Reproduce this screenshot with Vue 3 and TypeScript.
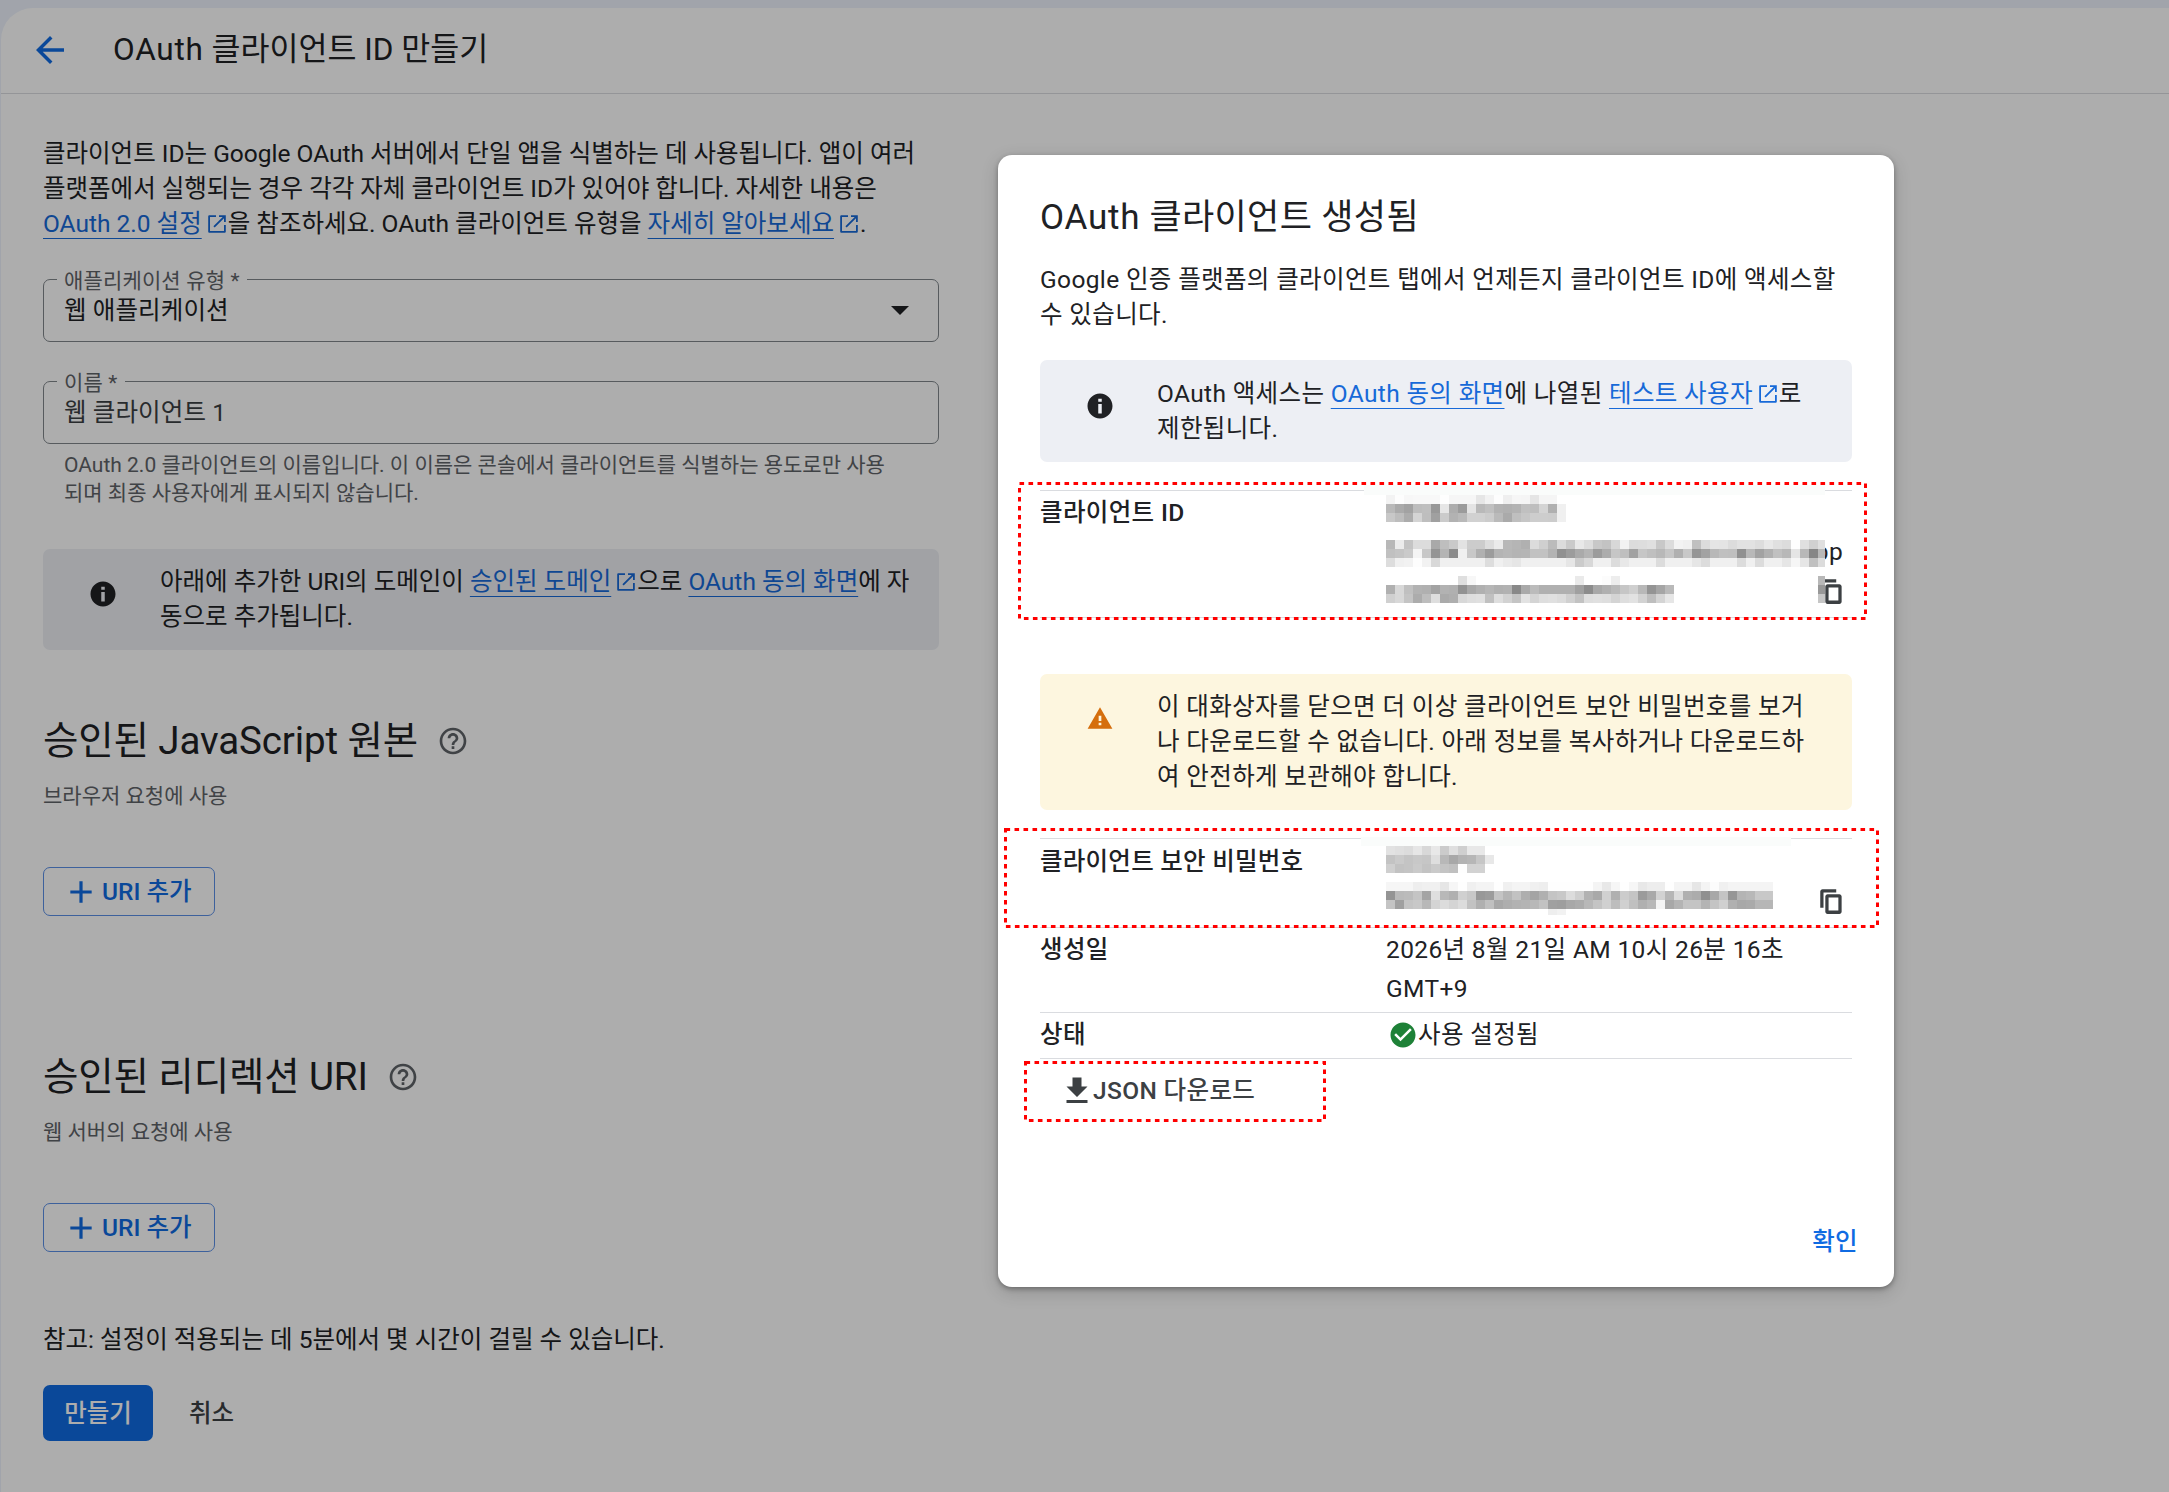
<script setup lang="ts">
import { h, type FunctionalComponent } from 'vue'

interface Mosaic {
  x: number
  y: number
  rows: string[]
}

const paths = {
  back: 'M20 11H7.83l5.59-5.59L12 4l-8 8 8 8 1.41-1.41L7.83 13H20v-2z',
  open: 'M19 19H5V5h6V3.2H4.6C3.7 3.200 3.200 3.700 3.200 4.600v14.800c0 .9.5 1.400 1.400 1.400h14.800c.9 0 1.400-.5 1.400-1.400V13H19v6zM14 3.200v1.800h3.700l-9.300 9.300 1.300 1.300L19 6.300V10h1.800V3.200H14z',
  info: 'M12 2C6.480 2 2 6.480 2 12s4.480 10 10 10 10-4.480 10-10S17.520 2 12 2zm1.400 16h-2.800v-7.600h2.800V18zm0-9.500h-2.800V6.200h2.800v2.300z',
  warn: 'M1 21h22L12 2 1 21zm12.200-3h-2.400v-2.200h2.400V18zm0-3.800h-2.400V9.500h2.400v4.700z',
  help: 'M11 18h2v-2h-2v2zm1-16C6.480 2 2 6.480 2 12s4.480 10 10 10 10-4.480 10-10S17.520 2 12 2zm0 18c-4.410 0-8-3.590-8-8s3.590-8 8-8 8 3.590 8 8-3.590 8-8 8zm0-14c-2.210 0-4 1.790-4 4h2c0-1.100.9-2 2-2s2 .9 2 2c0 2-3 1.750-3 5h2c0-2.250 3-2.500 3-5 0-2.210-1.790-4-4-4z',
  plus: 'M20 13.200h-6.800V20h-2.400v-6.800H4v-2.400h6.800V4h2.400v6.800H20v2.400z',
  copy: 'M16.200 1H4c-1.100 0-2 .9-2 2v14.500h2.900V3.900h11.300V1zm2.800 4.500H8.500c-1.100 0-2 .9-2 2V21c0 1.100.9 2 2 2H19c1.100 0 2-.9 2-2V7.500c0-1.100-.9-2-2-2zm-.9 14.600H9.400V8.400h8.700v11.700z',
  check: 'M12 2C6.480 2 2 6.480 2 12s4.480 10 10 10 10-4.480 10-10S17.520 2 12 2zm-2 15l-5-5 1.410-1.410L10 14.170l7.590-7.590L19 8l-9 9z',
  download: 'M19 9h-4V3H9v6H5l7 7 7-7zM5 18v2h14v-2H5z',
}

const Icon: FunctionalComponent<{ name: keyof typeof paths; size: number }> = (p) =>
  h('svg', { width: p.size, height: p.size, viewBox: '0 0 24 24', fill: 'currentColor' }, [
    h('path', { d: paths[p.name] }),
  ])
Icon.props = ['name', 'size']

const uriSections = [
  { title: '승인된 JavaScript 원본', hint: '브라우저 요청에 사용' },
  { title: '승인된 리디렉션 URI', hint: '웹 서버의 요청에 사용' },
]

// Each pair of hex digits is the grey level of one 9px cell.
const mosaics: Mosaic[] = [
  {
    x: 388, y: 340,
    rows: [
      'f3fdf7f8f8f8fef6f6f6e6f2fdeff6f5e5f5f5',
      'b9aaa2bdbf98e6ad9be4b9c0b2b0b3c0bed4b0f0',
      'c8bdacd4bea0cbb2b9d1d1ccbaaabfc6cdcdccf0',
    ],
  },
  {
    x: 388, y: 385,
    rows: [
      'b8ecc4dcdca9bec9e2ccccddebb8b5b0dccfbbdccae8ddc8c3d8f2dcdde0c8dcf3f0c0dce5e4dce2e2dde8e0dcfee0d0df',
      'c0c4caf4c894b48cf0c8b09cb4b7b4b5c2c2b3909caab49cacc6bfa2c6bfb8c6b0c895a2b8c0bf90b8a2b0c0b8e5b886b8',
      'ddf0f2fdf2d8f0f0f0f0f0ddf0eae6f0f0f0f0f0e6cbd8f0f0dce8f0f0f0dcf0f0f0e6dcf0f0f0dcf0dcf0f0e6f6e6c0dc',
    ],
  },
  {
    x: 388, y: 421,
    rows: [
      'ffffffffffffffffdff7ffffffffffffffffffffffeafffffced',
      'b0d8c0b2b0a3b2b092a8b0b6b0b289a9bbb0b0b0b0a08ca8b0b9c6cfb894a5b9',
      'd0d8c4acbddeaaaed8dee0c0ded2c4e2d4dee0dcd0c2dee0ded4dee2d2bed4e6',
    ],
  },
  { x: 820, y: 421, rows: ['b8', '98', 'c6'] },
  {
    x: 388, y: 691,
    rows: [
      'e2dfdce6d8e8cbdfcfe8e8',
      'c3cac4c8c6deb8a8b3b6c6e8',
      'cfc2c4cac3cac4c0fed2d2',
    ],
  },
  {
    x: 388, y: 727,
    rows: [
      'f6f6f6eef0f0e6f6fef0f4f4fef0f4f4f0eefefefefefef4e8f6fef6e8ededfef4f4e6f4fcf0f4f4f4f4f4',
      '94b9bbc4a4dfb8b0d0c8989cc4b5c2aea4b0c4c8dccfb2a9d0b0ccc49ba9d2b6dcb0ac90a8c496b4b8c8c8',
      'c4a0c4c8b8d4dcd4dcc2b0c0a8aeb2b4b8c2a09ea8acb8c4d0bdd0c0b0b8f4a8b4c4c4b4c4d0b0a8aab6b6',
      'ffffffffffffffffffffffffffffffffffffeef2',
    ],
  },
]

const cells = mosaics.flatMap((m) =>
  m.rows.flatMap((row, r) =>
    (row.match(/../g) ?? []).map((v, c) => ({
      x: m.x + c * 9,
      y: m.y + r * 9,
      w: Math.min(9, 827 - (m.x + c * 9)),
      h: r === 3 ? 6 : 9,
      fill: `#${v}${v}${v}`,
      skip: v === 'ff',
    })),
  ),
).filter((c) => !c.skip)

// Highlighted regions, relative to the dialog's corner.
const marks = [
  { x: 20, y: 327, w: 849, h: 138 },
  { x: 6, y: 673, w: 875, h: 100 },
  { x: 26, y: 906, w: 302, h: 61 },
]
</script>

<template>
  <div class="screen">
    <div class="page">
      <header class="topbar">
        <Icon name="back" :size="42" class="back" />
        <h1><span class="wide">OAuth</span> 클라이언트 ID 만들기</h1>
      </header>

      <main class="form">
        <p class="text">
          클라이언트 ID는 Google OAuth 서버에서 단일 앱을 식별하는 데 사용됩니다. 앱이 여러<br />
          플랫폼에서 실행되는 경우 각각 자체 클라이언트 ID가 있어야 합니다. 자세한 내용은<br />
          <a>OAuth 2.0 설정</a><Icon name="open" :size="24" class="ext" />을 참조하세요. OAuth 클라이언트 유형을 <a>자세히 알아보세요</a><Icon name="open" :size="24" class="ext" />.
        </p>

        <fieldset class="field">
          <legend>애플리케이션 유형 *</legend>
          <div class="value">웹 애플리케이션<i class="caret"></i></div>
        </fieldset>
        <fieldset class="field second">
          <legend>이름 *</legend>
          <div class="value soft">웹 클라이언트 1</div>
        </fieldset>
        <p class="helper">
          OAuth 2.0 클라이언트의 이름입니다. 이 이름은 콘솔에서 클라이언트를 식별하는 용도로만 사용<br />
          되며 최종 사용자에게 표시되지 않습니다.
        </p>

        <div class="notice left">
          <Icon name="info" :size="30" class="nicon" />
          <p class="text">
            아래에 추가한 URI의 도메인이 <a>승인된 도메인</a><Icon name="open" :size="24" class="ext" />으로 <a>OAuth 동의 화면</a>에 자<br />
            동으로 추가됩니다.
          </p>
        </div>

        <section v-for="s in uriSections" :key="s.title" class="uris">
          <h2>{{ s.title }}<Icon name="help" :size="32" class="help" /></h2>
          <p class="hint">{{ s.hint }}</p>
          <button class="add"><Icon name="plus" :size="32" />URI 추가</button>
        </section>

        <p class="text note">참고: 설정이 적용되는 데 5분에서 몇 시간이 걸릴 수 있습니다.</p>
        <div class="actions">
          <button class="create">만들기</button>
          <button class="cancel">취소</button>
        </div>
      </main>
    </div>

    <div class="scrim"></div>

    <div class="dialog">
      <h3><span class="wide">OAuth</span> 클라이언트 생성됨</h3>
      <p class="text">
        Google 인증 플랫폼의 클라이언트 탭에서 언제든지 클라이언트 ID에 액세스할<br />
        수 있습니다.
      </p>

      <div class="notice">
        <Icon name="info" :size="30" class="nicon" />
        <p class="text">
          OAuth 액세스는 <a>OAuth 동의 화면</a>에 나열된 <a>테스트 사용자</a><Icon name="open" :size="24" class="ext" />로<br />
          제한됩니다.
        </p>
      </div>

      <div class="row client">
        <div class="label">클라이언트 ID</div>
        <div class="data end">
          <span class="tail">app</span>
          <Icon name="copy" :size="27" class="copy" />
        </div>
      </div>

      <div class="notice warning">
        <Icon name="warn" :size="27" class="nicon" />
        <p class="text">
          이 대화상자를 닫으면 더 이상 클라이언트 보안 비밀번호를 보거<br />
          나 다운로드할 수 없습니다. 아래 정보를 복사하거나 다운로드하<br />
          여 안전하게 보관해야 합니다.
        </p>
      </div>

      <div class="row secret">
        <div class="label tight">클라이언트 보안 비밀번호</div>
        <div class="data end"><Icon name="copy" :size="27" class="copy" /></div>
      </div>
      <div class="row created">
        <div class="label">생성일</div>
        <div class="data">2026년 8월 21일 AM 10시 26분 16초<br />GMT+9</div>
      </div>
      <div class="row status">
        <div class="label">상태</div>
        <div class="data"><Icon name="check" :size="30" class="ok" />사용 설정됨</div>
      </div>
      <div class="download"><Icon name="download" :size="36" class="dl" /><span>JSON 다운로드</span></div>
      <div class="confirm">확인</div>

      <svg class="overlay" width="896" height="1132">
        <g shape-rendering="crispEdges">
          <rect x="366" y="330" width="461" height="10" fill="#fafcfb" />
          <rect x="363" y="682" width="430" height="9" fill="#fafcfb" />
          <rect v-for="(c, i) in cells" :key="i" :x="c.x" :y="c.y" :width="c.w" :height="c.h" :fill="c.fill" />
        </g>
        <rect
          v-for="m in marks"
          :key="m.y"
          :x="m.x + 1.5"
          :y="m.y + 1.5"
          :width="m.w - 3"
          :height="m.h - 3"
          fill="none"
          stroke="#ff0000"
          stroke-width="3"
          stroke-dasharray="4.600 4.400"
        />
      </svg>
    </div>
  </div>
</template>

<style>
body {
  margin: 0;
}
</style>

<style scoped>
.screen {
  position: relative;
  width: 2169px;
  height: 1492px;
  overflow: hidden;
  box-sizing: border-box;
  padding: 8px 0 0 1px;
  background: #edf2fc;
  color: #202124;
  font-family: Roboto, 'Noto Sans CJK KR', sans-serif;
  font-size: 24.5px;
  line-height: 35px;
  white-space: nowrap;
}
p, h1, h2, h3 {
  margin: 0;
  font-weight: 400;
}
svg {
  flex: none;
}
a {
  color: #1769d8;
  text-decoration: underline 1px;
  text-underline-offset: 6px;
  text-decoration-skip-ink: none;
}
.page {
  height: 1484px;
  background: #fff;
  border-top-left-radius: 32px;
}
.topbar {
  display: flex;
  align-items: center;
  height: 85px;
  padding-left: 28px;
  border-bottom: 1px solid #dadce0;
}
.back {
  color: #0f6be2;
  margin-bottom: 2px;
}
h1 {
  margin-left: 42px;
  font-size: 31.5px;
  line-height: 42px;
  padding-bottom: 2px;
}
.wide {
  letter-spacing: 0.8px;
}
.form {
  width: 896px;
  padding: 42px 0 0 42px;
}
.ext {
  color: #1769d8;
  margin: 0 -1px 0 3px;
  vertical-align: -4px;
}
.field {
  box-sizing: border-box;
  min-width: 0;
  height: 75px;
  margin: 26px 0 0;
  padding: 0 0 0 13px;
  border: 1px solid #80868b;
  border-radius: 7px;
}
.field.second {
  margin-top: 27px;
}
.field legend {
  height: 24px;
  padding: 0 7px;
  font-size: 21px;
  line-height: 29px;
  letter-spacing: 0.15px;
  color: #5f6368;
}
.value {
  display: flex;
  align-items: center;
  justify-content: space-between;
  height: 35px;
  margin-top: 2px;
  padding: 0 29px 0 7px;
  letter-spacing: 0.1px;
}
.value.soft {
  color: #3c4043;
}
.caret {
  border: 9px solid transparent;
  border-top-color: #202124;
  border-bottom: 0;
}
.helper {
  margin: 7px 0 0 21px;
  font-size: 21px;
  line-height: 28px;
  color: #5f6368;
}
.notice {
  box-sizing: border-box;
  display: flex;
  height: 102px;
  margin-top: 28px;
  padding: 16px 0 0 45px;
  border-radius: 7px;
  background: #edeff4;
}
.notice.left {
  height: 101px;
  margin-top: 42px;
  padding-top: 15px;
}
.nicon {
  width: 30px;
  margin: 15px 42px 0 0;
}
.uris {
  margin-top: 62px;
}
.uris + .uris {
  margin-top: 132px;
}
h2 {
  display: flex;
  align-items: center;
  height: 56px;
  padding-top: 1px;
  box-sizing: border-box;
  font-size: 38.5px;
  line-height: 56px;
  letter-spacing: -0.12px;
}
.help {
  margin: 0 0 0 19px;
  color: #5f6368;
}
.hint {
  margin-top: 14px;
  font-size: 21px;
  line-height: 28px;
  color: #5f6368;
}
button {
  display: flex;
  align-items: center;
  box-sizing: border-box;
  border: 0;
  border-radius: 7px;
  background: none;
  padding: 0;
  font: inherit;
  font-weight: 500;
  white-space: nowrap;
}
.add {
  width: 172px;
  height: 49px;
  margin-top: 57px;
  padding-left: 21px;
  gap: 5px;
  border: 1px solid #5a8fe6;
  color: #0f6be2;
}
.note {
  margin-top: 70px;
}
.actions {
  display: flex;
  margin-top: 28px;
}
.create {
  justify-content: center;
  width: 110px;
  height: 56px;
  background: #0f6be2;
  color: #fff;
}
.cancel {
  margin-left: 36px;
  color: #3c4043;
}
.scrim {
  position: absolute;
  inset: 0;
  background: rgba(0, 0, 0, 0.32);
}
.dialog {
  position: absolute;
  left: 998px;
  top: 155px;
  box-sizing: border-box;
  width: 896px;
  height: 1132px;
  padding: 35px 42px 0;
  border-radius: 14px;
  background: #fff;
  box-shadow: 0 2px 5px rgba(0, 0, 0, 0.3), 0 5px 18px rgba(0, 0, 0, 0.16);
  letter-spacing: 0.36px;
}
h3 {
  font-size: 35px;
  line-height: 56px;
  margin-bottom: 16px;
}
.row {
  box-sizing: border-box;
  display: flex;
  padding-top: 3px;
  border-top: 1px solid #dadce0;
  line-height: 38.5px;
}
.label {
  width: 346px;
  font-weight: 500;
}
.label.tight {
  letter-spacing: 0.25px;
  padding-top: 1px;
}
.data {
  flex: 1;
}
.data.end {
  display: flex;
  flex-direction: column;
  align-items: flex-end;
}
.client {
  height: 128px;
  margin-top: 28px;
  border-bottom: 1px solid #dadce0;
}
.tail {
  margin: 39px 9px 0 0;
}
.copy {
  color: #3c4043;
  margin-right: 7px;
}
.client .copy {
  margin-top: 6px;
}
.secret .copy {
  margin-top: 46px;
}
.warning {
  height: 136px;
  margin-top: 56px;
  padding-top: 15px;
  background: #fdf6df;
}
.warning .nicon {
  color: #d56e0c;
  margin-top: 16px;
}
.secret {
  height: 89px;
  margin-top: 28px;
}
.created {
  height: 85px;
}
.status {
  height: 47px;
  border-bottom: 1px solid #dadce0;
}
.ok {
  margin: 0 0 0 2px;
  color: #1e8137;
  vertical-align: -7px;
}
.download {
  display: flex;
  align-items: center;
  height: 62px;
  padding-left: 19px;
  color: #3c4043;
  font-weight: 500;
}
.dl {
  margin: 2px -2px 0 0;
}
.confirm {
  margin-top: 103px;
  margin-right: -6px;
  text-align: right;
  font-weight: 500;
  color: #0f6be2;
}
.overlay {
  position: absolute;
  left: 0;
  top: 0;
}
</style>
